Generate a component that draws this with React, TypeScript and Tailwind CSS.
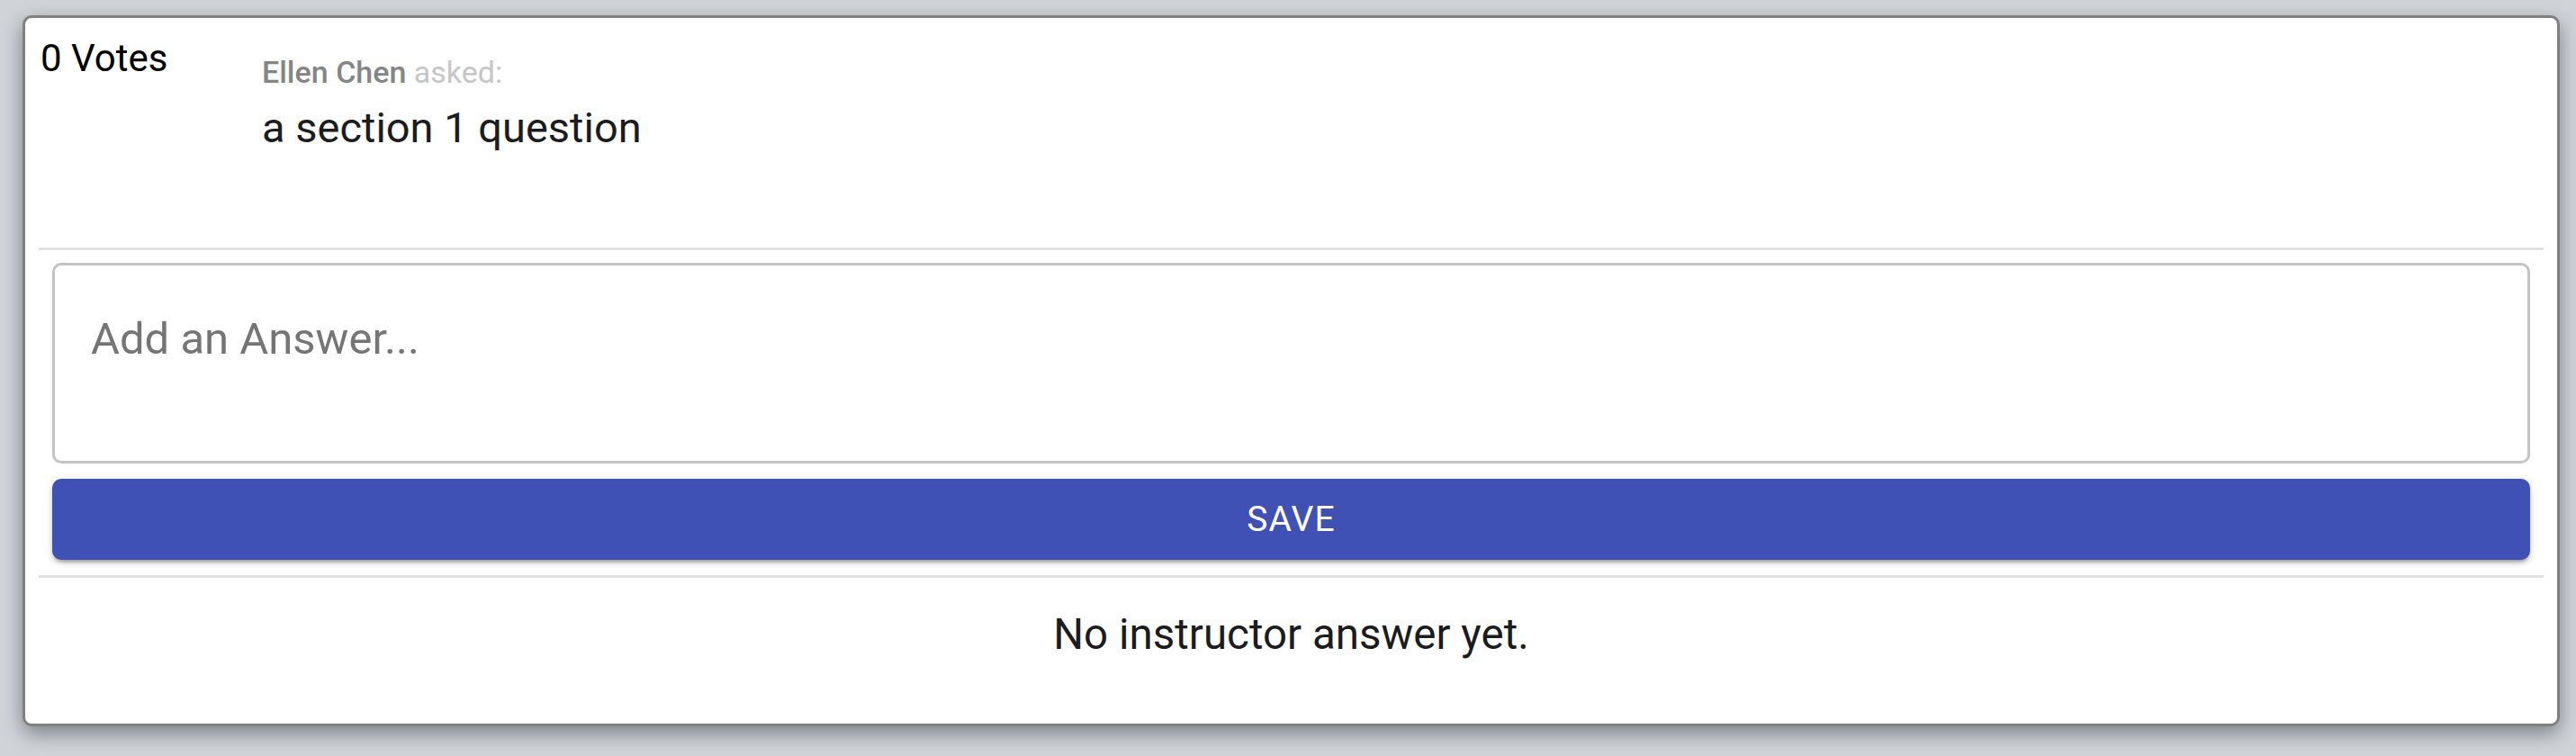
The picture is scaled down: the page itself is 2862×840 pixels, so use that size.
import React from "react";

export default function App() {
  return (
    <div className="w-[2862px] h-[840px] bg-[#d0d4d9] pt-[17px] pl-[25px] font-['Roboto',sans-serif] overflow-hidden">
      <div className="w-[2819px] h-[790px] bg-white border-[3px] border-[#808080] rounded-[10px] px-[15px] shadow-[0_8px_22px_rgba(0,0,0,0.4)] flex flex-col">
        <div className="h-[255px] pt-[20px] flex">
          <div className="w-[248px] pl-[2px] text-[42px] leading-[50px] text-black">0 Votes</div>
          <div className="flex flex-col mt-[20px]">
            <div className="text-[34px] leading-[40px]">
              <span className="font-medium text-[#858585]">Ellen Chen</span>{" "}
              <span className="text-[#c6c6c6]">asked:</span>
            </div>
            <div className="mt-[14px] text-[47px] leading-[56px] text-[#1c1c1c]">a section 1 question</div>
          </div>
        </div>
        <div className="h-[3px] bg-[#e0e0e0]" />
        <div className="px-[15px] pt-[14px] flex flex-col">
          <textarea
            className="h-[223px] w-full resize-none border-[3px] border-[#c4c4c4] rounded-[10px] pt-[54px] pl-[40px] pr-[40px] text-[49px] leading-[56px] text-[#1c1c1c] placeholder:text-[#757575] outline-none font-['Roboto',sans-serif]"
            placeholder="Add an Answer..."
          />
          <button className="mt-[17px] h-[90px] w-full rounded-[10px] bg-[#3f51b5] text-white text-[39px] leading-[90px] font-normal tracking-[1.1px] uppercase shadow-[0_5px_3px_-3px_rgba(0,0,0,0.2),0_4px_5px_0_rgba(0,0,0,0.14),0_2px_10px_0_rgba(0,0,0,0.12)] font-['Roboto',sans-serif]">
            Save
          </button>
        </div>
        <div className="mt-[17px] h-[3px] bg-[#e0e0e0]" />
        <div className="mt-[36px] text-center text-[47.5px] leading-[54px] text-[#1c1c1c]">No instructor answer yet.</div>
      </div>
    </div>
  );
}
